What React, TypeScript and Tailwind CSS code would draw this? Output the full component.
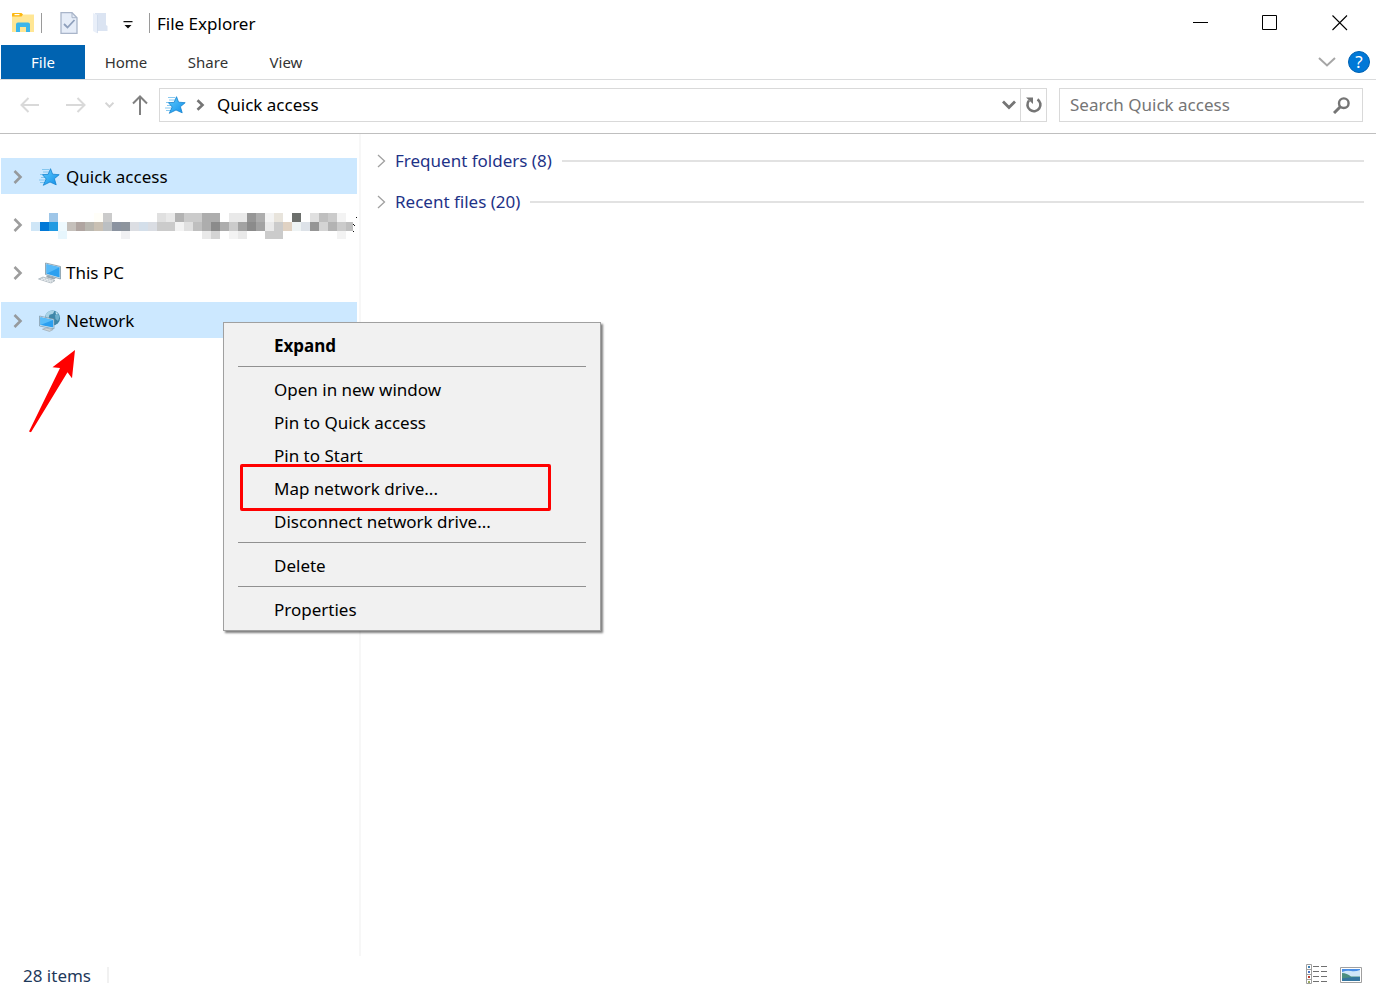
import { useState } from 'react';

interface NavItem {
  id: string;
  label: string;
  selected: boolean;
}

const navItems: NavItem[] = [
  { id: 'quick', label: 'Quick access', selected: true },
  { id: 'account', label: '', selected: false },
  { id: 'pc', label: 'This PC', selected: false },
  { id: 'network', label: 'Network', selected: true },
];

const groups = [
  { name: 'Frequent folders', count: 8 },
  { name: 'Recent files', count: 20 },
];

// null draws a separator
const menuItems = [
  'Expand',
  null,
  'Open in new window',
  'Pin to Quick access',
  'Pin to Start',
  'Map network drive...',
  'Disconnect network drive...',
  null,
  'Delete',
  null,
  'Properties',
];

// [column, row, colour] of each block over the hidden account name
const blocks: [number, number, string][] = [
  [2, 0, '#9ec6e8'], [7, 0, '#fffef8'], [8, 0, '#cbcbcb'], [14, 0, '#e0e0e0'], [15, 0, '#e9e9e9'],
  [16, 0, '#b3b3b3'], [17, 0, '#cbcbcb'], [18, 0, '#cbcbcb'], [19, 0, '#adadad'], [20, 0, '#adadad'],
  [22, 0, '#e9e9e9'], [23, 0, '#e9e9e9'], [24, 0, '#969696'], [25, 0, '#adadad'], [26, 0, '#f3f3f3'],
  [27, 0, '#e8e4dc'], [29, 0, '#6c6f6c'], [31, 0, '#e0e0e0'], [32, 0, '#bfbfbf'], [33, 0, '#cbcbcb'],
  [34, 0, '#f3f3f3'],
  [0, 1, '#cfe6f7'], [1, 1, '#0078d7'], [2, 1, '#209ae2'], [3, 1, '#eef9fe'], [4, 1, '#c5c0bb'],
  [5, 1, '#b0a5a1'], [6, 1, '#b9b7b0'], [7, 1, '#c9c0b3'], [8, 1, '#bbbfc2'], [9, 1, '#8b93a0'],
  [10, 1, '#8d949d'], [11, 1, '#dcdee3'], [12, 1, '#d4dfea'], [13, 1, '#dadde3'], [14, 1, '#cbcbcb'],
  [15, 1, '#cbcbcb'], [16, 1, '#f3f3f3'], [17, 1, '#e0e0e0'], [18, 1, '#bfbfbf'], [19, 1, '#adadad'],
  [20, 1, '#8b8b8b'], [21, 1, '#adadad'], [22, 1, '#cbcbcb'], [23, 1, '#a2a2a2'], [24, 1, '#8b8b8b'],
  [25, 1, '#a2a2a2'], [26, 1, '#e9e9e9'], [27, 1, '#cbcbcb'], [28, 1, '#e0d2c3'], [29, 1, '#eef3f4'],
  [30, 1, '#dde2e8'], [31, 1, '#969696'], [32, 1, '#d4d4d4'], [33, 1, '#b3b3b3'], [34, 1, '#cbcbcb'],
  [35, 1, '#bfbfbf'],
  [3, 2, '#e7f6fd'], [10, 2, '#f1f1f3'], [19, 2, '#e9e9e9'], [20, 2, '#d4d4d4'], [22, 2, '#f3f3f3'],
  [23, 2, '#e9e9e9'], [26, 2, '#cbcbcb'], [27, 2, '#cbcbcb'], [34, 2, '#f3f3f3'],
];

const StarIcon = () => (
  <svg width="21" height="18" viewBox="0 0 21 18" aria-hidden="true">
    <defs>
      <linearGradient id="star" x1="0" y1="0" x2="1" y2="1">
        <stop offset="0" stopColor="#5fcbfb" />
        <stop offset="1" stopColor="#0f8eea" />
      </linearGradient>
    </defs>
    <path d="M3 1.500h7M4 4h6M1 6.500h4M2 9.500h5M0 12h7M1 14.500h5" stroke="#7cc3ee" strokeWidth="0.900" />
    <path
      d="M11.500.7L13.600 6.200l6.600.500-4.800 4 1.800 6.100L11 14l-6.700 3.300L7.200 11 3.500 6.700l5.700-.4z"
      fill="url(#star)"
      stroke="#1583cf"
      strokeWidth="0.8"
      strokeLinejoin="round"
    />
  </svg>
);

const PcIcon = () => (
  <svg width="24" height="22" viewBox="0 0 24 22" aria-hidden="true">
    <path d="M7.5 1 22.5 4.5V17L7.5 12.5z" fill="#d9e6ee" stroke="#7f97a6" strokeWidth="0.8" />
    <path d="M8.500 2.200 21.600 5.300V15.600L8.500 11.800z" fill="#2ba0f0" />
    <path d="M8.500 2.200 21.600 5.300 8.500 11.800z" fill="#57b9f8" />
    <path d="M9 13.200 18 16l-2 1.600-8-2.400z" fill="#9aa9b3" />
    <path d="M.5 17 5 15l12 3.600-4 2.400z" fill="#c9d2d8" stroke="#a5b0b7" strokeWidth="0.7" />
    <path d="M3 17.200l10 2.900M5 16.200l10 2.900" stroke="#fff" strokeWidth="0.7" strokeDasharray="2 1" />
  </svg>
);

const NetworkIcon = () => (
  <svg width="24" height="22" viewBox="0 0 24 22" aria-hidden="true">
    <circle cx="14.500" cy="8" r="7.600" fill="#3e86a8" />
    <path d="M7.500 5.500c1-3.500 5-5.500 9-4.700l-1.500 3-3.500 1-1 3.700-3-1z" fill="#a9d3e6" />
    <path d="M17 5l3-1.500 1.500 3.500-1.500 4-2.500-2z" fill="#6db0cd" />
    <path d="M17.500 1.500l2.500 2-2 1z" fill="#c8e5f0" />
    <path d="M1.500 6 16 9.200v9.600L1.500 16z" fill="#d9e9f2" stroke="#7894a6" strokeWidth="0.7" />
    <path d="M2.400 7.200 15.200 10v7.600L2.400 15z" fill="#2b9ff0" />
    <path d="M2.400 7.200 15.200 10 2.400 15z" fill="#5abdf9" />
    <path d="M4.500 19.200 8 18l7 1.600-3.500 1.800z" fill="#cdd5da" stroke="#9ba8b0" strokeWidth="0.7" />
  </svg>
);

const AccountName = () => (
  <svg width="326" height="26" viewBox="0 0 326 26" shapeRendering="crispEdges" role="img" aria-label="Hidden account">
    {blocks.map(([col, row, color]) => (
      <rect key={`${col}-${row}`} x={col * 9} y={row * 9} width={col === 35 ? 7 : 9} height="9" fill={color} />
    ))}
    <path d="M325 4h1v1h-1zM322 11h1v1h-1zM323 12h1v1h-1zM322 18h1v1h-1z" fill="#111" />
  </svg>
);

const TreeChevron = () => (
  <svg width="10" height="16" viewBox="0 0 10 16" fill="none" stroke="#8c8c8c" strokeOpacity="0.85" strokeWidth="2.600" aria-hidden="true">
    <path d="M1.500 2 7.500 8 1.500 14" />
  </svg>
);

const ContextMenu = () => (
  <div
    role="menu"
    className="absolute left-[222px] top-5 z-10 w-[378px] border border-[#a0a0a0] bg-[#f1f1f1] pt-1.5 pb-1 shadow-[2px_2px_2px_rgba(0,0,0,0.5)]"
  >
    {menuItems.map((item, i) =>
      item === null ? (
        <hr key={i} className="mx-3.5 mt-1 mb-1.5 border-t border-[#919191]" />
      ) : (
        <button
          key={item}
          type="button"
          role="menuitem"
          className={`relative block h-[33px] w-full pl-[50px] text-left text-black ${item === 'Expand' ? 'font-bold' : ''}`}
        >
          {item}
          {item === 'Map network drive...' && (
            <span className="absolute -top-2 -bottom-1.5 left-4 w-[311px] rounded-[2px] border-3 border-[#ff0000]" />
          )}
        </button>
      )
    )}
  </div>
);

const NavIcon = ({ id }: { id: string }) => {
  if (id === 'quick') return <StarIcon />;
  if (id === 'pc') return <PcIcon />;
  return <NetworkIcon />;
};

const App = () => {
  const [search, setSearch] = useState('');

  return (
    <div className="flex min-h-screen flex-col bg-white font-['Noto_Sans',sans-serif] text-[17px] leading-6 text-black">
      {/* title bar */}
      <header className="flex h-[45px] items-center pl-3">
        <svg width="22" height="19" viewBox="0 0 22 19" aria-hidden="true">
          <path d="M0 1.500h22V19H0z" fill="#ffe694" />
          <path d="M0 1q0-1 1-1h8.500L11 1.500 9.500 3.500H0z" fill="#fdb813" />
          <path d="M2.500 1h5v1.200h-5z" fill="#fff" />
          <path d="M4 19v-7.500q0-2 2-2h10q2 0 2 2V19h-4v-5H8v5z" fill="#3bb5ea" />
        </svg>
        <span className="ml-[7px] h-5 w-px bg-[#9a9a9a]" />
        <button type="button" aria-label="Properties" className="ml-[18px]">
          <svg width="18" height="22" viewBox="0 0 18 22" fill="none" aria-hidden="true">
            <path d="M1 .7H12l5 5v15.600H1z" fill="#e6edf8" stroke="#a9b5c9" strokeWidth="1.300" />
            <path d="M12 .7v5h5" stroke="#a9b5c9" />
            <path d="M4 12l3.500 3.500L14.500 8" stroke="#8fa0bc" strokeWidth="1.800" />
          </svg>
        </button>
        <button type="button" aria-label="New folder" className="ml-[15px]">
          <svg width="15" height="22" viewBox="0 0 15 22" aria-hidden="true">
            <path d="M2 1h11v12l1.500 1v5H2z" fill="#dbe4f2" />
            <path d="M0 1l4.500 2v18.500L0 19z" fill="#e9eff9" />
            <path d="M4.500 3v18" stroke="#cbd7ea" strokeWidth="0.7" />
          </svg>
        </button>
        <button type="button" aria-label="Customize Quick Access Toolbar" className="ml-[15px]">
          <svg width="10" height="10" viewBox="0 0 10 10" className="mt-1" aria-hidden="true">
            <path d="M.5 1h9v1.300h-9zM1.500 5h7L5 8.500z" fill="#111" />
          </svg>
        </button>
        <span className="ml-4 h-5 w-px bg-[#9a9a9a]" />
        <h1 className="ml-[7px] pt-0.5">File Explorer</h1>
        <div className="mr-px ml-auto flex items-center">
          <button type="button" aria-label="Minimize" className="flex h-[45px] w-[69px] items-center justify-center">
            <svg width="16" height="16" viewBox="0 0 16 16" aria-hidden="true">
              <path d="M0 7.500h15" stroke="#000" />
            </svg>
          </button>
          <button type="button" aria-label="Maximize" className="flex h-[45px] w-[69px] items-center justify-center">
            <svg width="16" height="16" viewBox="0 0 16 16" fill="none" aria-hidden="true">
              <path d="M.5.5h14v14H.5z" stroke="#000" />
            </svg>
          </button>
          <button type="button" aria-label="Close" className="flex h-[45px] w-[71px] items-center justify-center">
            <svg width="16" height="16" viewBox="0 0 16 16" aria-hidden="true">
              <path d="M.5.5l14.500 14.500M15 .5L.5 15" stroke="#000" strokeWidth="1.100" />
            </svg>
          </button>
        </div>
      </header>

      {/* ribbon tabs */}
      <div className="flex h-[35px] items-center border-b border-[#dadbdc] pl-px text-[15px] text-[#333]">
        <button type="button" className="h-[34px] w-[84px] bg-[#0063b1] text-white">File</button>
        <button type="button" className="h-[34px] w-[82px]">Home</button>
        <button type="button" className="h-[34px] w-[82px]">Share</button>
        <button type="button" className="h-[34px] w-[74px]">View</button>
        <button type="button" aria-label="Expand the Ribbon" className="ml-auto">
          <svg width="18" height="10" viewBox="0 0 18 10" fill="none" stroke="#a6a6a6" strokeWidth="2" aria-hidden="true">
            <path d="M1 1l8 7.500L17 1" />
          </svg>
        </button>
        <button
          type="button"
          aria-label="Help"
          className="mr-1.5 ml-3 flex size-[22px] items-center justify-center rounded-full border border-[#0062b3] bg-[#0078d7] text-[17px] leading-5 text-white"
        >
          ?
        </button>
      </div>

      {/* address bar */}
      <div className="flex h-[54px] items-center border-b border-[#bfbfbf] pr-[13px] pb-[3px] pl-5">
        <button type="button" aria-label="Back">
          <svg width="20" height="16" viewBox="0 0 20 16" fill="none" stroke="#d9d9d9" strokeWidth="2" aria-hidden="true">
            <path d="M19 8H1.500M8.500 1l-7 7 7 7" />
          </svg>
        </button>
        <button type="button" aria-label="Forward" className="ml-[26px]">
          <svg width="20" height="16" viewBox="0 0 20 16" fill="none" stroke="#d9d9d9" strokeWidth="2" aria-hidden="true">
            <path d="M0 8h18.500M11.500 1l7 7-7 7" />
          </svg>
        </button>
        <button type="button" aria-label="Recent locations" className="ml-[19px]">
          <svg width="9" height="6" viewBox="0 0 9 6" fill="none" stroke="#d4d4d4" strokeWidth="2" aria-hidden="true">
            <path d="M.5.700l4 4 4-4" />
          </svg>
        </button>
        <button type="button" aria-label="Up" className="ml-[18px]">
          <svg width="16" height="20" viewBox="0 0 16 20" fill="none" stroke="#808080" strokeWidth="2" aria-hidden="true">
            <path d="M8 20V1.500M1 8.500l7-7 7 7" />
          </svg>
        </button>
        <div className="ml-[11px] flex h-[34px] flex-1 items-center border border-[#d9d9d9] pl-[5px]">
          <StarIcon />
          <svg width="9" height="12" viewBox="0 0 9 12" fill="none" stroke="#757575" strokeWidth="2.600" className="ml-2.5" aria-hidden="true">
            <path d="M1.500 1.300L6.500 6l-5 4.700" />
          </svg>
          <button type="button" className="ml-3">Quick access</button>
          <button type="button" aria-label="Previous locations" className="mr-1 ml-auto">
            <svg width="14" height="10" viewBox="0 0 14 10" fill="none" stroke="#757575" strokeWidth="2.800" aria-hidden="true">
              <path d="M1 1.500l6 6 6-6" />
            </svg>
          </button>
          <button type="button" aria-label="Refresh" className="flex h-8 w-[26px] items-center justify-center border-l border-[#d9d9d9]">
            <svg width="18" height="18" viewBox="0 0 18 18" fill="none" aria-hidden="true">
              <path d="M4 4.500a6.500 6.500 0 1 0 8.500-1.200" stroke="#757575" strokeWidth="2.600" />
              <path d="M1 1.500h7v6.500z" fill="#757575" />
            </svg>
          </button>
        </div>
        <div className="ml-3 flex h-[34px] w-[304px] items-center border border-[#d9d9d9] pr-3 pl-2.5">
          <input
            type="text"
            aria-label="Search Quick access"
            placeholder="Search Quick access"
            value={search}
            onChange={(e) => setSearch(e.target.value)}
            className="min-w-0 flex-1 outline-none placeholder:text-[#757575]"
          />
          <svg width="17" height="17" viewBox="0 0 17 17" fill="none" stroke="#757575" aria-hidden="true">
            <circle cx="10.800" cy="6.200" r="4.800" strokeWidth="2.400" />
            <path d="M7.300 9.700L1 16" strokeWidth="3" />
          </svg>
        </div>
      </div>

      <main className="flex flex-1">
        <nav className="w-[361px] shrink-0 border-r-2 border-[#f7f7f7] pt-6 pr-0.5 pl-px">
          <ul className="flex flex-col gap-3">
            {navItems.map((item) => (
              <li key={item.id} className="relative">
                <button
                  type="button"
                  className={`flex h-9 w-[356px] items-center pt-0.5 pl-3 ${item.selected ? 'bg-[#cce8ff]' : ''}`}
                >
                  <TreeChevron />
                  {item.label ? (
                    <>
                      <span className="ml-3.5 flex w-[25px] justify-center">
                        <NavIcon id={item.id} />
                      </span>
                      <span className="ml-1">{item.label}</span>
                    </>
                  ) : (
                    <span className="ml-2 pt-0.5">
                      <AccountName />
                    </span>
                  )}
                </button>
                {item.id === 'network' && (
                  <>
                    <svg width="50" height="84" viewBox="0 0 50 84" className="absolute top-12 left-7" aria-hidden="true">
                      <path d="M46 0L23.500 17.300l7.500.700L0 81.500l2 .700L38.500 22.300l4.500 6z" fill="#ff0000" />
                    </svg>
                    <ContextMenu />
                  </>
                )}
              </li>
            ))}
          </ul>
        </nav>
        <section className="flex flex-1 flex-col gap-[17px] pt-[15px] pr-3 pl-4">
          {groups.map((group) => (
            <button key={group.name} type="button" className="flex items-center text-[#1e3287]">
              <svg width="9" height="14" viewBox="0 0 9 14" fill="none" stroke="#a0a0a0" strokeWidth="1.300" aria-hidden="true">
                <path d="M1 1l6.500 6L1 13" />
              </svg>
              <span className="ml-[9px]">
                {group.name} ({group.count})
              </span>
              <span className="ml-2.5 h-0.5 flex-1 bg-[#e2e2e2]" />
            </button>
          ))}
        </section>
      </main>

      {/* status bar */}
      <footer className="flex h-[37px] items-center pr-3.5 pl-[23px] text-[#1e395b]">
        <span className="pt-0.5">28 items</span>
        <span className="ml-4 h-4 w-0.5 bg-[#f1f1f1]" />
        <button type="button" aria-label="Details view" className="ml-auto">
          <svg width="22" height="22" viewBox="0 0 22 22" fill="none" aria-hidden="true">
            <path d="M.5.5h5v19h-5zM.5 5.500h5M.5 10.500h5M.5 15.500h5" stroke="#a0a0a0" />
            <path d="M2 2h2v2H2z" fill="#3c7fb5" />
            <path d="M2 7h2v2H2z" fill="#4a73c4" />
            <path d="M2 12h2v2H2z" fill="#c0392b" />
            <path d="M2 17h2v2H2z" fill="#9aa860" />
            <path d="M7 2.500h6M15 2.500h6M7 7.500h6M15 7.500h6M7 12.500h6M15 12.500h6M7 17.500h6M15 17.500h6" stroke="#707070" />
          </svg>
        </button>
        <button type="button" aria-label="Large icons view" className="ml-3">
          <svg width="22" height="16" viewBox="0 0 22 16" aria-hidden="true">
            <path d="M.5.5h21v15H.5z" fill="#fff" stroke="#a0a0a0" />
            <path d="M2 2h18v6H2z" fill="#4a8fe6" />
            <path d="M2 5q5-2 9-1t9-1v7H2z" fill="#cfe6f8" />
            <path d="M2 6q5 0 9 3.500h9V12H2z" fill="#4b8f80" />
            <path d="M2 11.500q8-2 18-1.500v4H2z" fill="#3476a0" />
          </svg>
        </button>
      </footer>
    </div>
  );
};

export default App;
